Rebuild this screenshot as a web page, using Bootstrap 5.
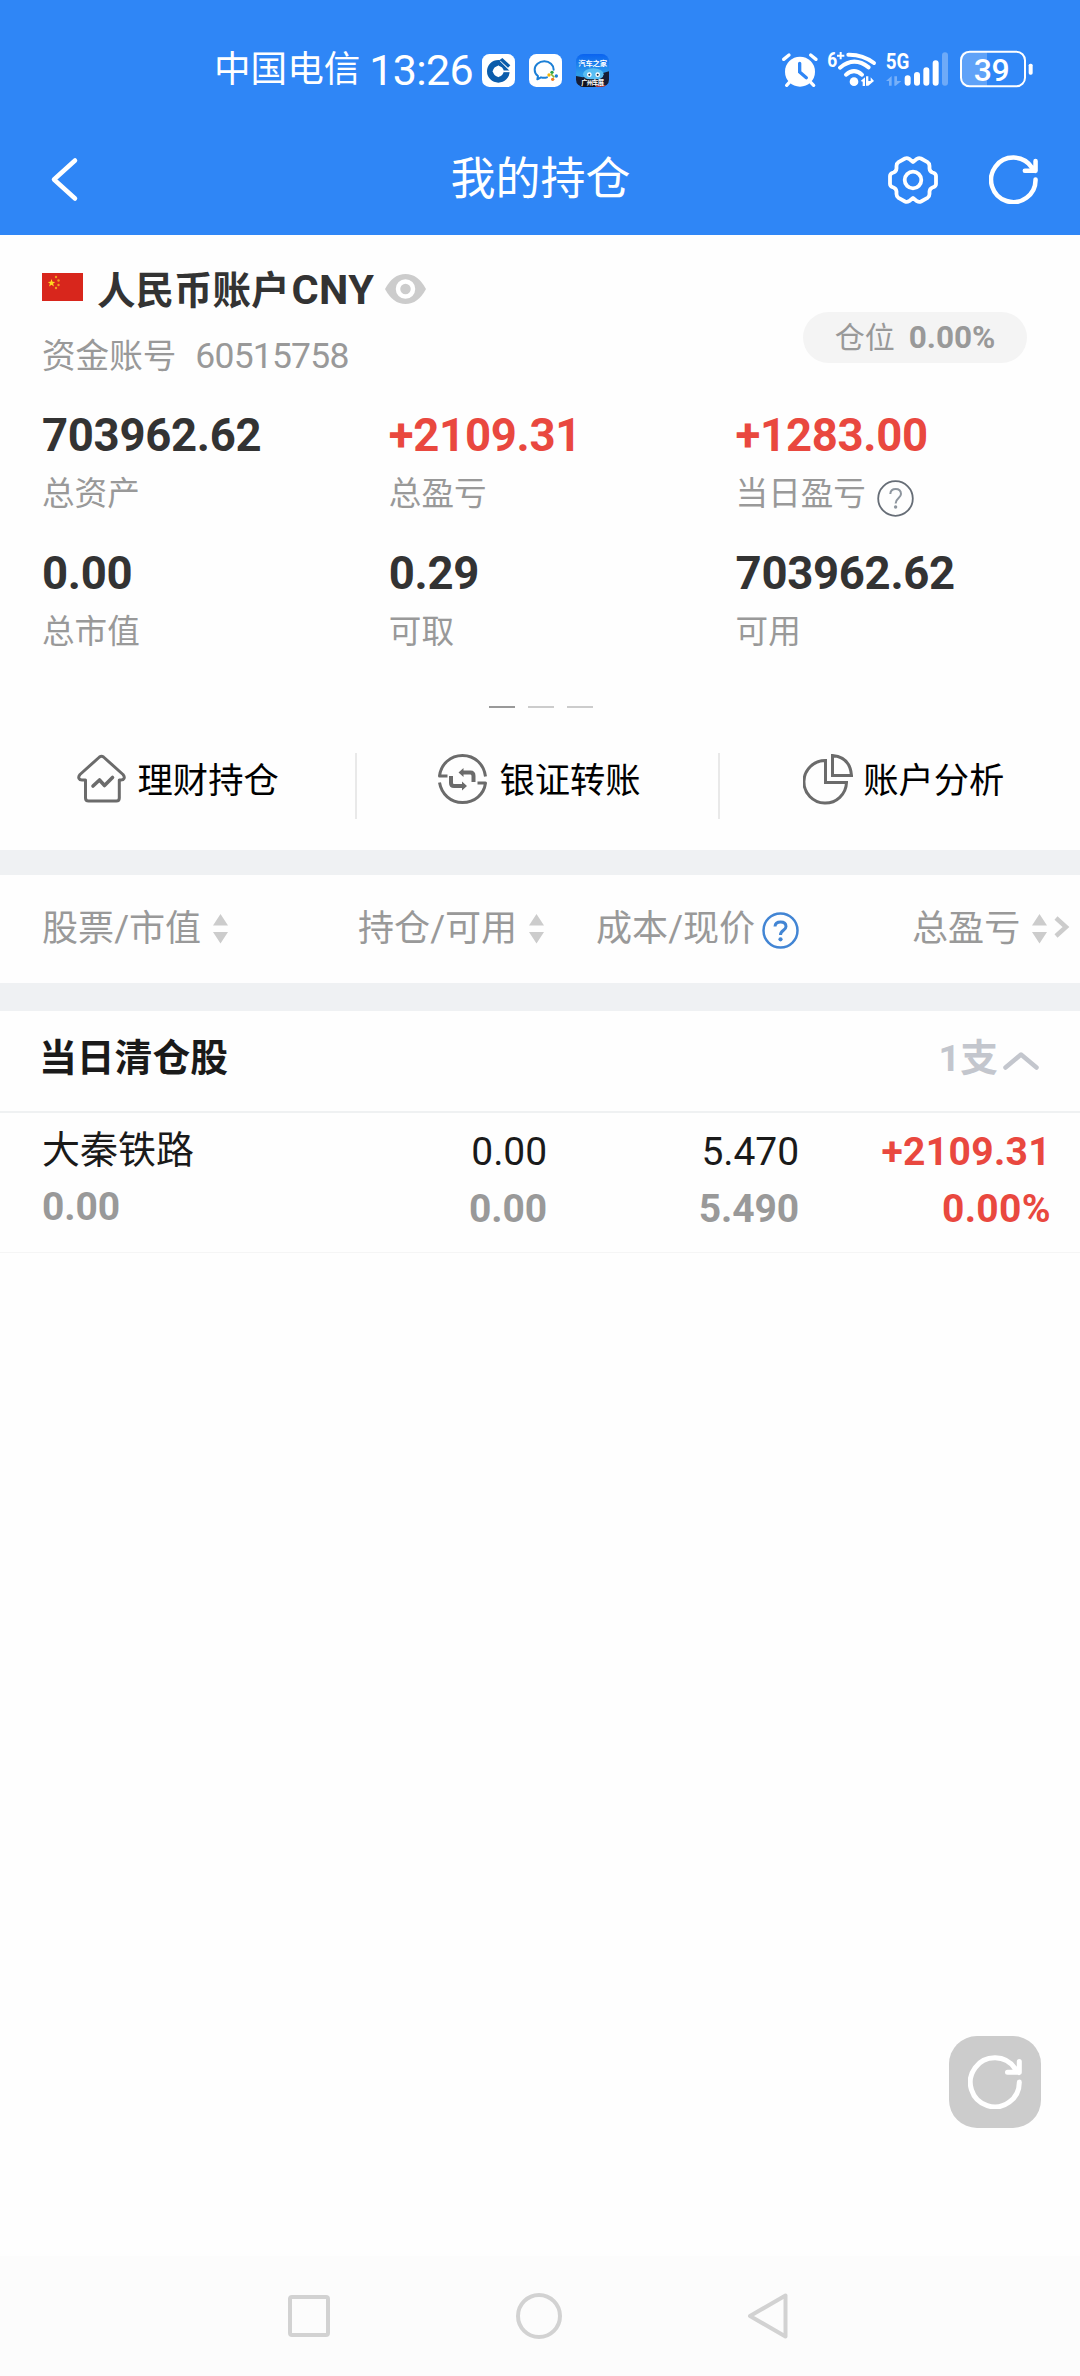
<!DOCTYPE html>
<html lang="zh-CN">
<head>
<meta charset="utf-8">
<meta name="viewport" content="width=device-width, initial-scale=1">
<title>我的持仓</title>
<link href="https://cdn.jsdelivr.net/npm/bootstrap@5.3.0/dist/css/bootstrap.min.css" rel="stylesheet">
<style>
  body { font-family: Roboto, "Noto Sans CJK SC", sans-serif; background: #fefefe; color: #1a1a1a; width: 1080px; line-height: 1; }
  svg { display: block; flex: none; }
  .screen { height: 2376px; overflow: hidden; }
  .topbar { background: #2f86f6; height: 235px; color: #fff; }
  .status { height: 124px; padding: 16px 47px 0 214px; }
  .carrier { font-size: 36.6px; padding-top: 1px; }
  .clock { font-size: 43px; letter-spacing: -.7px; margin-left: 9px; width: 113px; }
  .titlebar { height: 111px; padding: 0 42px 0 50px; }
  .page-title { font-size: 45px; margin-bottom: 1px; }
  .account-head { height: 155px; padding: 23px 53px 0 42px; }
  .acct-name { height: 64px; font-size: 38.5px; font-weight: 700; color: #333; }
  .acct-name .latin { font-size: 41.5px; margin-left: 2px; letter-spacing: .4px; }
  .acct-no { height: 70px; font-size: 33.6px; color: #999; }
  .acct-no .num { font-size: 35.5px; margin-left: 19px; letter-spacing: -.8px; }
  .pos-pill { width: 224px; height: 51px; margin-top: 54px; background: #f4f4f4; color: #999; font-size: 30px; }
  .pos-pill b { font-size: 31.5px; margin-left: 14px; }
  .stats { padding: 16px 0 0 42px; row-gap: 22px; }
  .stat { width: 346.8px; }
  .stat:nth-child(3n) { width: 340px; }
  .stat-value { height: 60px; line-height: 60px; font-size: 45.5px; font-weight: 700; color: #333; letter-spacing: -.3px; }
  .stat-label { height: 56px; font-size: 32.6px; color: #999; padding-top: 1px; }
  .up, .stat-value.up { color: #e9483f; }
  .pager { margin: 46px 0 0 2px; gap: 13px; }
  .pager i { width: 26px; height: 2px; background: #ccc; }
  .pager i.on { background: #999; }
  .actions { height: 142px; color: #000; font-size: 35.3px; }
  .actions .cell { width: 361px; gap: 12px; }
  .actions .cell:first-child { width: 356px; }
  .actions .cell.mid { padding-left: 4px; }
  .actions .cell:last-child { padding-left: 8px; gap: 10px; }
  .actions .cell span { padding-top: 6px; }
  .actions .rule { width: 2px; height: 66px; background: #e9e9e9; margin-top: 14px; }
  .band { background: #eff1f3; height: 25px; }
  .band-b { height: 28px; }
  .thead-row { height: 108px; padding: 1px 0 0 42px; font-size: 36.1px; color: #999; }
  .thead-row .h1c { width: 316px; } .thead-row .h2c { width: 238px; } .thead-row .h3c { width: 316px; }
  .sorter { margin: -1px 0 0 12px; }
  .group-head { height: 102px; padding: 0 41px 4px 39px; border-bottom: 2px solid #eff1f2; font-size: 37.8px; font-weight: 700; }
  .group-head .count { color: #c3c6cd; }
  .holding { height: 140px; border-bottom: 1px solid #f5f5f5; font-size: 39px; padding-left: 42px; }
  .holding .c { line-height: 57px; padding-top: 11px; text-align: right; letter-spacing: -.1px; }
  .holding .c1 { width: 254px; text-align: left; padding-top: 9px; }
  .holding .c1 div:first-child { font-size: 38px; letter-spacing: 0; }
  .holding .c2 { width: 251px; } .holding .c3 { width: 252px; } .holding .c4 { width: 252px; letter-spacing: .35px; }
  .holding .sub { font-weight: 700; color: #999; }
  .refresh-fab { position: fixed; left: 949px; top: 2036px; width: 92px; height: 92px; border-radius: 28px; background: #ccc; }
  .sysnav { height: 120px; background: #fcfcfc; padding: 0 290px 0 287px; }
</style>
<script src="https://cdn.jsdelivr.net/npm/bootstrap@5.3.0/dist/js/bootstrap.bundle.min.js"></script>
</head>
<body>
<svg width="0" height="0" class="position-absolute">
  <defs>
    <symbol id="sort" viewBox="0 0 15 30"><path d="M7.500 0L15 11.500H0zM0 18H15L7.500 29.500z" fill="#ccc"/></symbol>
    <symbol id="reload" viewBox="0 0 54 54"><path d="M51.300 27A24.500 24.500 0 1 1 47 13.500L51 17.500M51.300 6.500V17.300H39.500" fill="none" stroke="currentColor" stroke-width="5" stroke-linecap="round" stroke-linejoin="round"/></symbol>
  </defs>
</svg>
<div class="screen d-flex flex-column">
  <header class="topbar">
    <div class="status d-flex align-items-center">
      <span class="carrier">中国电信</span>
      <span class="clock">13:26</span>
      <div class="d-flex me-auto" style="gap:14px">
        <svg width="33" height="33" viewBox="0 0 99 99"><rect width="99" height="99" rx="22" fill="#fff"/><circle cx="49" cy="52" r="25" fill="none" stroke="#0b5cab" stroke-width="18"/><path d="M54 22L84 52L95 46L68 14z" fill="#fff"/><path d="M49 34L67 52L49 70L31 52z" fill="#fff"/><path d="M53 18L61 12L85 34L78 41z" fill="#0b5cab"/><path d="M66 52H92" stroke="#fff" stroke-width="5"/></svg>
        <svg width="33" height="33" viewBox="0 0 99 99"><rect width="99" height="99" rx="22" fill="#fff"/><path d="M74 47C74 33 62 22 46 22S17 33 17 47C17 56 21 62 27 66L25 76L36 70C42 72 48 72 54 70" fill="none" stroke="#1b7fd6" stroke-width="6" stroke-linecap="round" stroke-linejoin="round"/><circle cx="69" cy="55" r="5" fill="#2aa147"/><circle cx="60" cy="63" r="5" fill="#f4b400"/><circle cx="82" cy="66" r="5" fill="#1b7fd6"/><circle cx="71" cy="76" r="5" fill="#f07a1d"/><path d="M66 60L76 70" stroke="#8bb733" stroke-width="5"/></svg>
        <svg width="33" height="33" viewBox="0 0 99 99"><defs><linearGradient id="sky" x2="0" y2="1"><stop offset="0" stop-color="#0a63f0"/><stop offset=".6" stop-color="#2d9bea"/></linearGradient><clipPath id="rc"><rect width="99" height="99" rx="22"/></clipPath></defs><g clip-path="url(#rc)"><rect width="99" height="99" fill="url(#sky)"/><path d="M0 66L20 70L50 66L99 52V99H0z" fill="#161d36"/><ellipse cx="52" cy="61" rx="31" ry="18" fill="#58bdf2"/><circle cx="40" cy="62" r="7" fill="#fff"/><circle cx="65" cy="62" r="7" fill="#fff"/><circle cx="40" cy="62" r="3" fill="#123"/><circle cx="65" cy="62" r="3" fill="#123"/><path d="M18 76H82L76 99H12z" fill="#10131f"/><path d="M60 96H90" stroke="#d93838" stroke-width="4"/><text x="7" y="36" font-size="22" font-weight="700" fill="#fff" textLength="86">汽车之家</text><text x="16" y="94" font-size="19" font-weight="700" fill="#fff" textLength="68">广州车展</text></g></svg>
      </div>
      <svg width="253" height="46" viewBox="60 52 759 138" style="margin-top:2px">
        <g fill="none" stroke="#fff" stroke-width="10" stroke-linecap="round">
          <circle cx="120" cy="123" r="45" fill="#fff" stroke="none"/><path d="M71 86L87 73M168 86L152 73M90 153L80 164M150 153L161 164"/><path d="M119 98V124L139 141" stroke="#2f86f6"/>
          <path d="M265 72Q308 71 342 97M240 111Q282 75 326 110" stroke-width="12"/><path d="M258 132Q282 111 306 132" stroke-width="12"/><circle cx="282" cy="153" r="13" fill="#fff" stroke="none"/>
        </g>
        <path d="M302 151L315 140V166H308V153zM318 137H325V151H332V140L342 151L325 165H318z" fill="#fff"/>
        <path d="M378 151L395 136V165H387V151zM403 137H411V151H424L407 165H403z" fill="#fff" opacity=".35"/>
        <g stroke="#fff" stroke-width="18" stroke-linecap="round"><path d="M443 143V156M471 133V156M499 119V156M527 98V156"/><path d="M555 74V156" opacity=".3"/></g>
        <path d="M681 62V168H622Q602 168 602 148V82Q602 62 622 62z" fill="#fff" opacity=".23"/>
        <rect x="603" y="63" width="192" height="104" rx="26" fill="none" stroke="#fff" stroke-width="6"/><rect x="806" y="99" width="12" height="33" rx="5" fill="#fff"/>
        <g fill="#fff" font-family="Roboto, sans-serif" font-weight="500"><text x="202" y="108" font-size="62" font-weight="700" textLength="30" lengthAdjust="spacingAndGlyphs">6</text><path d="M231 75H253M242 64V86" stroke="#fff" stroke-width="6"/><text x="377" y="115" font-size="66" font-weight="700" textLength="71" lengthAdjust="spacingAndGlyphs">5G</text><text x="641" y="150" font-size="96" textLength="108">39</text></g>
      </svg>
    </div>
    <div class="titlebar d-flex align-items-center justify-content-between">
      <svg width="144" height="48" viewBox="0 0 144 48" fill="none" stroke="#fff" stroke-width="4.500" stroke-linecap="round" stroke-linejoin="round"><path d="M25 4.500L4 23.500L25 42.500"/></svg>
      <span class="page-title">我的持仓</span>
      <div class="d-flex align-items-center" style="gap:50px">
        <svg width="52" height="52" viewBox="-26 -26 52 52" fill="none" stroke="#fff" stroke-width="3.800" stroke-linejoin="round"><path d="M0 -18L4 -21.200Q6 -22.500 8 -21.500L14.500 -17.800Q16.500 -16.500 16.500 -14V-11.500Q16.800 -8.500 19.500 -7.500Q23 -6.500 23 -4V4Q23 6.500 19.500 7.500Q16.800 8.500 16.500 11.500V14Q16.500 16.500 14.500 17.800L8 21.500Q6 22.500 4 21.200L0 18L-4 21.200Q-6 22.500 -8 21.500L-14.500 17.800Q-16.500 16.500 -16.500 14V11.500Q-16.800 8.500 -19.500 7.500Q-23 6.500 -23 4V-4Q-23 -6.500 -19.500 -7.500Q-16.800 -8.500 -16.500 -11.500V-14Q-16.500 -16.500 -14.500 -17.800L-8 -21.500Q-6 -22.500 -4 -21.200z"/><circle r="8.300"/></svg>
        <svg width="49" height="49"><use href="#reload"/></svg>
      </div>
    </div>
  </header>

  <section>
    <div class="account-head d-flex justify-content-between align-items-start">
      <div>
        <div class="acct-name d-flex align-items-center">
          <svg width="41" height="28" viewBox="0 0 41 28" style="margin:0 14px 7px 0"><rect width="41" height="28" fill="#d8261c"/><path d="M9.500 6l1 2.700 2.700.2-2.100 1.700.8 2.800-2.400-1.600-2.400 1.600.8-2.800-2.100-1.700 2.700-.2z" fill="#ffd91f"/><g fill="#f29c1f"><circle cx="14" cy="4" r="1.200"/><circle cx="16.500" cy="7.500" r="1.200"/><circle cx="16.500" cy="12" r="1.200"/><circle cx="14" cy="15" r="1.200"/></g></svg>
          <span>人民币账户<span class="latin">CNY</span></span>
          <svg width="41" height="30" viewBox="0 0 41 30" style="margin:0 0 3px 11px"><path d="M0 15Q8 0 20.500 0T41 15Q33 30 20.500 30T0 15z" fill="#ccc"/><circle cx="20.500" cy="15" r="7.500" fill="#ccc" stroke="#fff" stroke-width="4.500"/></svg>
        </div>
        <div class="acct-no d-flex align-items-center">资金账号<span class="num">60515758</span></div>
      </div>
      <div class="pos-pill rounded-pill d-flex align-items-center justify-content-center">仓位<b>0.00%</b></div>
    </div>
    <div class="stats d-flex flex-wrap">
      <div class="stat"><div class="stat-value">703962.62</div><div class="stat-label d-flex align-items-center">总资产</div></div>
      <div class="stat"><div class="stat-value up">+2109.31</div><div class="stat-label d-flex align-items-center">总盈亏</div></div>
      <div class="stat"><div class="stat-value up">+1283.00</div><div class="stat-label d-flex align-items-center">当日盈亏
        <svg width="37" height="37" viewBox="0 0 37 37" style="margin:8px 0 0 11px"><circle cx="18.500" cy="18.500" r="17.300" fill="none" stroke="#666d76" stroke-width="1.800"/><path d="M13.300 14Q13.600 9 18.700 9T24 14C24 18 18.600 18 18.600 23.500" fill="none" stroke="#8d959e" stroke-width="2"/><circle cx="18.600" cy="27" r="1.700" fill="#8d959e"/></svg></div></div>
      <div class="stat"><div class="stat-value">0.00</div><div class="stat-label d-flex align-items-center">总市值</div></div>
      <div class="stat"><div class="stat-value">0.29</div><div class="stat-label d-flex align-items-center">可取</div></div>
      <div class="stat"><div class="stat-value">703962.62</div><div class="stat-label d-flex align-items-center">可用</div></div>
    </div>
    <div class="pager d-flex justify-content-center"><i class="on"></i><i></i><i></i></div>
    <div class="actions d-flex align-items-center">
      <div class="cell d-flex align-items-center justify-content-center">
        <svg width="49" height="50" viewBox="0 0 49 50" fill="none" stroke="#6b6b6b" stroke-width="3" stroke-linejoin="round" stroke-linecap="round"><path d="M22.500 3Q24.500 1.500 26.500 3L46 20.500C48.500 23.500 47 26 44 26H42.300V44Q42.300 47 39.300 47H11.700Q8.500 47 8.500 44V26H5C2 26 .5 23.500 3 20.500z"/><path d="M16 32L22.500 26L27.500 31.500L35.500 23.500" stroke-width="3.600"/></svg>
        <span>理财持仓</span>
      </div>
      <div class="rule"></div>
      <div class="cell mid d-flex align-items-center justify-content-center">
        <svg width="49" height="50" viewBox="0 0 49 50" fill="none" stroke="#6b6b6b" stroke-width="3" stroke-linejoin="round"><path d="M9.500 22H1.500C3 10 12.500 1.500 24.500 1.500C37 1.500 46 10.500 47.500 22.500M39.500 29H47.500C46 40.500 36.500 48.500 24.500 48.500C12.500 48.500 3.500 40 1.500 28.500"/><g stroke-width="4"><path d="M13 22V29Q13 32 16 32H25M35.500 28V22Q35.500 18.500 32.500 18.500H24"/></g><path d="M24 27.500L29 32L24 36.500zM25.500 14L20.500 18.500L25.500 23z" fill="#6b6b6b" stroke="none"/></svg>
        <span>银证转账</span>
      </div>
      <div class="rule"></div>
      <div class="cell d-flex align-items-center justify-content-center">
        <svg width="50" height="51" viewBox="0 0 50 51" fill="none" stroke="#6b6b6b" stroke-width="3"><path d="M22.500 6.500A21.300 21.300 0 1 0 43.500 28.500H22.500zM29.500 1.500V21.500H48.500Q47 3 29.500 1.500z"/></svg>
        <span>账户分析</span>
      </div>
    </div>
  </section>

  <div class="band"></div>
  <div class="thead-row d-flex align-items-center">
    <div class="h1c d-flex align-items-center">股票/市值<svg class="sorter" width="15" height="30"><use href="#sort"/></svg></div>
    <div class="h2c d-flex align-items-center">持仓/可用<svg class="sorter" width="15" height="30"><use href="#sort"/></svg></div>
    <div class="h3c d-flex align-items-center">成本/现价<svg width="37" height="37" viewBox="0 0 37 37" style="margin:2px 0 0 7px"><circle cx="18.500" cy="18.500" r="17" fill="none" stroke="#4285d4" stroke-width="2.500"/><path d="M13 14.500Q13.300 10 18.600 10T24 14.500C24 18.500 18.500 18 18.500 23" fill="none" stroke="#4285d4" stroke-width="3"/><circle cx="18.500" cy="27.300" r="2.100" fill="#4285d4"/></svg></div>
    <div class="d-flex align-items-center">总盈亏<svg class="sorter" width="15" height="30"><use href="#sort"/></svg>
      <svg width="16" height="24" viewBox="0 0 16 24" style="margin:-5px 0 0 7px" fill="none" stroke="#ccc" stroke-width="4.500"><path d="M2 3L12 12L2 21"/></svg></div>
  </div>
  <div class="band band-b"></div>
  <div class="group-head d-flex align-items-center justify-content-between">
    <span>当日清仓股</span>
    <span class="count d-flex align-items-center">1支<svg width="36" height="18" viewBox="0 0 36 18" style="margin:5px 0 0 5px" fill="none" stroke="#c3c6cd" stroke-width="4.500" stroke-linecap="round" stroke-linejoin="round"><path d="M2.500 15.500L18 2.500L33.500 15.500"/></svg></span>
  </div>
  <div class="holding d-flex">
    <div class="c c1"><div>大秦铁路</div><div class="sub">0.00</div></div>
    <div class="c c2"><div>0.00</div><div class="sub">0.00</div></div>
    <div class="c c3"><div>5.470</div><div class="sub">5.490</div></div>
    <div class="c c4 fw-bold up"><div>+2109.31</div><div>0.00%</div></div>
  </div>

  <button class="refresh-fab btn p-0 border-0 text-white d-flex align-items-center justify-content-center" aria-label="刷新"><svg width="54" height="54"><use href="#reload"/></svg></button>

  <nav class="sysnav d-flex align-items-center justify-content-between mt-auto">
    <svg width="44" height="46" viewBox="0 0 44 46" fill="none" stroke="#d2d2d2" stroke-width="4"><rect x="3" y="4" width="38" height="38" rx="2"/></svg>
    <svg width="46" height="46" viewBox="0 0 46 46" fill="none" stroke="#d2d2d2" stroke-width="4"><circle cx="23" cy="23" r="21"/></svg>
    <svg width="44" height="46" viewBox="0 0 44 46" fill="none" stroke="#d2d2d2" stroke-width="4" stroke-linejoin="round"><path d="M39.500 2.500V43.500L4 23z"/></svg>
  </nav>
</div>
</body>
</html>
